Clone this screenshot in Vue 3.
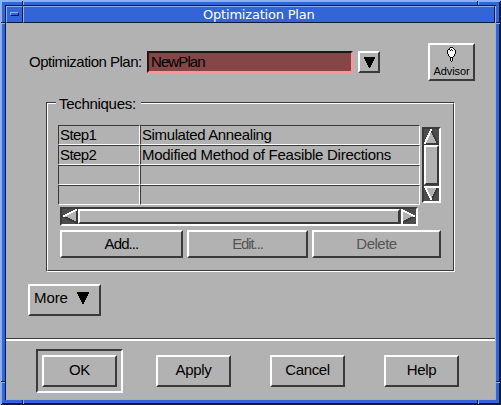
<script setup>
const rows = [
  ['Step1', 'Simulated Annealing'],
  ['Step2', 'Modified Method of Feasible Directions'],
  ['', ''],
  ['', ''],
]
const actions = [
  { label: 'Apply', cls: 't-apply' },
  { label: 'Cancel', cls: 't-cancel' },
  { label: 'Help', cls: 't-help' },
]
</script>

<template>
  <div class="window">
    <svg class="frame" width="501" height="405" shape-rendering="crispEdges">
      <rect width="501" height="405" fill="#3465d6" />
      <path d="M0 0H501V1H500V2H2V404H1V405H0Z" fill="#8fb0ee" />
      <path d="M501 1V405H1V404H2V403H499V2H500V1Z" fill="#0e1b38" />
      <path d="M5 5H496V6H6V400H5Z" fill="#0e1b38" />
      <path d="M495 6H496V400H6V399H495Z" fill="#8fb0ee" />
      <path d="M22 1h1v4h-1zM1 22h4v1h-4zM477 1h1v4h-1zM496 22h4v1h-4zM1 381h4v1h-4zM496 381h4v1h-4zM22 400h1v4h-1zM477 400h1v4h-1z" fill="#0e1b38" />
      <path d="M23 2h1v3h-1zM2 23h3v1h-3zM478 2h1v3h-1zM496 23h4v1h-4zM1 382h4v1h-4zM496 382h4v1h-4zM23 400h1v4h-1zM478 400h1v4h-1z" fill="#8fb0ee" />
    </svg>
    <header class="titlebar">
      <span class="sysmenu"><i class="dash"></i></span>
      <span class="title"><span class="t-title">Optimization Plan</span></span>
    </header>

    <main class="body">
      <div class="planrow">
        <label class="t-plan">Optimization Plan:</label>
        <div class="field"><span class="t-new">NewPlan</span></div>
        <div class="raised drop">
          <svg width="18" height="18" shape-rendering="crispEdges"><path d="M4 4H15V6H14V8H13V10H12V12H11V14H10V15H9V14H8V12H7V10H6V8H5V6H4Z" /></svg>
        </div>
        <div class="raised advisor">
          <svg width="11" height="16" viewBox="0 0 11 16" shape-rendering="crispEdges">
            <path d="M4 0H7V1H8V2H9V8H8V10H7V14H4V10H3V8H2V2H3V1H4Z" fill="#fff" />
            <path d="M4 0h3v1h-3zM3 1h1v1h-1zM7 1h1v1h-1zM2 2h1v1h-1zM8 2h1v1h-1zM1 3h1v4h-1zM9 3h1v4h-1zM2 7h1v2h-1zM8 7h1v2h-1zM3 9h1v1h-1zM7 9h1v1h-1zM4 10h1v4h-1zM6 10h1v4h-1zM5 14h1v1h-1zM5 2h1v1h-1zM4 3h1v1h-1zM6 3h1v1h-1zM3 2h1v1h-1zM5 10h1v1h-1z" fill="#000" />
          </svg>
          <span class="t-adv">Advisor</span>
        </div>
      </div>

      <section class="group">
        <div class="groupinner">
          <h2 class="legend"><span class="t-tech">Techniques:</span></h2>
          <div class="grid">
            <div class="table">
              <template v-for="(r, i) in rows" :key="i">
                <div class="cell"><span class="t-step">{{ r[0] }}</span></div>
                <div class="cell"><span :class="'t-tec' + i">{{ r[1] }}</span></div>
              </template>
            </div>
            <div class="scroll vertical">
              <svg width="15" height="16" shape-rendering="crispEdges"><path d="M7 1L14 15H0Z" fill="#b2b2b2" /><path d="M7 1L14 15H0" fill="none" stroke="#3a3a3a" stroke-width="2" /><path d="M7.500 0L.5 15" stroke="#fff" stroke-width="2" /></svg>
              <div class="raised thumb"></div>
              <svg width="15" height="16" shape-rendering="crispEdges"><path d="M0 1H14L7.500 15Z" fill="#b2b2b2" /><path d="M14 2L7.500 15" stroke="#3a3a3a" stroke-width="2" /><path d="M15 2H1L7.500 15" fill="none" stroke="#fff" stroke-width="2" /></svg>
            </div>
          </div>
          <div class="scroll horizontal">
            <svg width="16" height="15" shape-rendering="crispEdges"><path d="M1 7L15 0V14Z" fill="#b2b2b2" /><path d="M1 7.500L15 14V0" fill="none" stroke="#3a3a3a" stroke-width="2" /><path d="M1 7.500L15 .5" stroke="#fff" stroke-width="2" /></svg>
            <div class="raised thumb"></div>
            <svg width="16" height="15" shape-rendering="crispEdges"><path d="M1 0L15 7L1 14Z" fill="#b2b2b2" /><path d="M15 7.500L1 14" stroke="#3a3a3a" stroke-width="2" /><path d="M2 15V1L15 7.500" fill="none" stroke="#fff" stroke-width="2" /></svg>
          </div>
          <div class="tools">
            <div class="raised btn add"><span class="t-add">Add...</span></div>
            <div class="raised btn edit"><span class="t-edit">Edit...</span></div>
            <div class="raised btn del"><span class="t-del">Delete</span></div>
          </div>
        </div>
      </section>

      <div class="raised more">
        <span class="t-more">More</span>
        <svg width="13" height="12" shape-rendering="crispEdges"><path d="M0 0H12V2H11V4H10V6H9V8H8V10H7V12H5V10H4V8H3V6H2V4H1V2H0Z" /></svg>
      </div>
    </main>

    <footer class="actions">
      <div class="default"><div class="raised action"><span class="t-ok">OK</span></div></div>
      <div v-for="a in actions" :key="a.label" class="raised action"><span :class="a.cls">{{ a.label }}</span></div>
    </footer>
  </div>
</template>

<style>
body { margin: 0; overflow: hidden; }
</style>

<style scoped>
* { box-sizing: border-box; }
svg { display: block; flex: none; }
.window {
  position: relative; width: 501px; height: 405px; padding: 6px;
  display: flex; flex-direction: column;
  font: 15px/20px "Liberation Sans", Arial, sans-serif; color: #000; white-space: nowrap;
}
.frame { position: absolute; left: 0; top: 0; }
.titlebar, .body, .actions { position: relative; width: 489px; }
.titlebar { display: flex; height: 17px; background: #3465d6; }
.sysmenu, .title { border: 1px solid; border-color: #8fb0ee #0e1b38 #0e1b38 #8fb0ee; }
.sysmenu { width: 17px; padding: 5px 0 0 3px; }
.dash { display: block; width: 9px; height: 4px; border: 1px solid; border-color: #8fb0ee #0e1b38 #0e1b38 #8fb0ee; }
.title { flex: 1; padding-left: 179px; color: #fff; font: 13px/15px "DejaVu Sans", sans-serif; letter-spacing: -.2px; }
.body { height: 315px; background: #b2b2b2; padding-top: 20px; }
.raised { border: 2px solid; border-color: #fff #3a3a3a #3a3a3a #fff; background: #b2b2b2; }
.planrow { display: flex; height: 38px; padding-left: 23px; }
.planrow label { width: 118px; padding-top: 9px; letter-spacing: -.5px; }
.field { width: 206px; height: 22px; margin-top: 8px; padding-left: 2px; line-height: 18px; letter-spacing: -.9px; background: #844646; border: 2px solid; border-color: #241414 #ff9494 #ff9494 #241414; }
.drop { width: 22px; height: 22px; margin: 8px 48px 0 5px; }
.advisor { width: 47px; height: 38px; padding-top: 2px; display: flex; flex-direction: column; align-items: center; font-size: 11px; line-height: 16px; letter-spacing: -.1px; }
.group { width: 409px; height: 170px; margin: 21px 0 0 40px; border: 1px solid; border-color: #3a3a3a #fff #fff #3a3a3a; }
.groupinner { height: 168px; border: 1px solid; border-color: #fff #3a3a3a #3a3a3a #fff; padding-left: 10px; }
.legend { width: 85px; height: 20px; margin: -10px 0 11px -2px; padding-left: 3px; background: #b2b2b2; font: inherit; letter-spacing: -.3px; }
.grid { display: flex; gap: 2px; }
.table { display: grid; grid-template-columns: 82px 280px; grid-auto-rows: 20px; width: 362px; }
.cell { border: 1px solid; border-color: #3a3a3a #fff #fff #3a3a3a; padding-left: 1px; line-height: 18px; }
.t-step { letter-spacing: -.6px; }
.t-tec0 { letter-spacing: -.38px; }
.t-tec1 { letter-spacing: -.27px; }
.scroll { display: flex; background: #4c4c4c; border: 2px solid; border-color: #3a3a3a #fff #fff #3a3a3a; }
.vertical { flex-direction: column; width: 19px; height: 76px; margin-top: 2px; }
.vertical .thumb { height: 40px; }
.horizontal { width: 358px; height: 19px; margin: 2px 0 0 2px; }
.horizontal .thumb { flex: 1; }
.tools { display: flex; gap: 4px; margin: 4px 0 0 2px; }
.btn { height: 28px; display: flex; justify-content: center; line-height: 24px; }
.add { width: 123px; letter-spacing: -.9px; }
.edit { width: 121px; color: #555; letter-spacing: -1.1px; }
.del { width: 129px; color: #555; letter-spacing: -.5px; }
.more { display: flex; width: 73px; height: 32px; margin: 12px 0 0 22px; padding: 2px 0 0 4px; letter-spacing: -.1px; }
.more svg { margin: 4px 0 0 10px; }
.more span { width: 33px; }
.actions { display: flex; align-items: center; height: 61px; padding: 3px 0 0 30px; border-top: 1px solid #3a3a3a; background: #b2b2b2; box-shadow: inset 0 2px #fff; letter-spacing: -.35px; }
.default { border: 2px solid; border-color: #3a3a3a #fff #fff #3a3a3a; padding: 4px; }
.action { width: 75px; height: 32px; display: flex; justify-content: center; line-height: 26px; }
.default + .action { margin-left: 33px; }
.action + .action { margin-left: 39px; }
</style>
